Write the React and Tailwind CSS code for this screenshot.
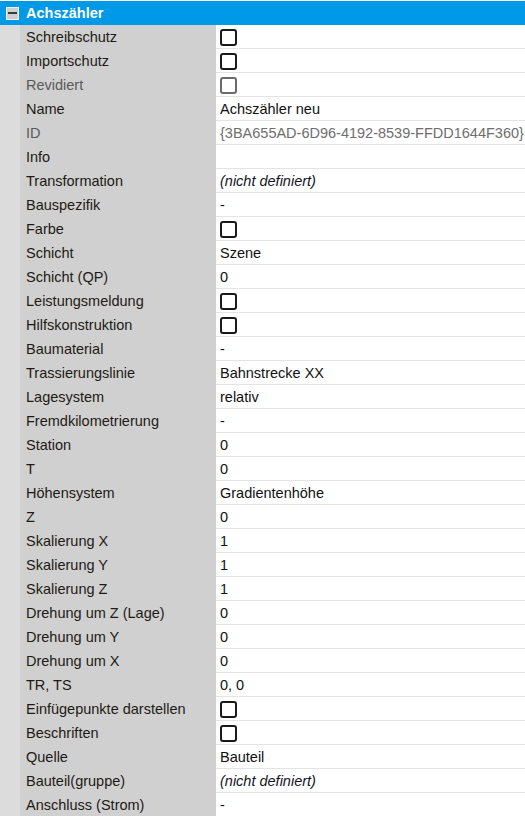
import React from 'react';

// property rows: [label, kind, value, muted]
const rows = [
    ['Schreibschutz', 'check'],
    ['Importschutz', 'check'],
    ['Revidiert', 'check', null, true],
    ['Name', 'text', 'Achszähler neu'],
    ['ID', 'text', '{3BA655AD-6D96-4192-8539-FFDD1644F360}', true],
    ['Info', 'text', ''],
    ['Transformation', 'italic', '(nicht definiert)'],
    ['Bauspezifik', 'text', '-'],
    ['Farbe', 'check'],
    ['Schicht', 'text', 'Szene'],
    ['Schicht (QP)', 'text', '0'],
    ['Leistungsmeldung', 'check'],
    ['Hilfskonstruktion', 'check'],
    ['Baumaterial', 'text', '-'],
    ['Trassierungslinie', 'text', 'Bahnstrecke XX'],
    ['Lagesystem', 'text', 'relativ'],
    ['Fremdkilometrierung', 'text', '-'],
    ['Station', 'text', '0'],
    ['T', 'text', '0'],
    ['Höhensystem', 'text', 'Gradientenhöhe'],
    ['Z', 'text', '0'],
    ['Skalierung X', 'text', '1'],
    ['Skalierung Y', 'text', '1'],
    ['Skalierung Z', 'text', '1'],
    ['Drehung um Z (Lage)', 'text', '0'],
    ['Drehung um Y', 'text', '0'],
    ['Drehung um X', 'text', '0'],
    ['TR, TS', 'text', '0, 0'],
    ['Einfügepunkte darstellen', 'check'],
    ['Beschriften', 'check'],
    ['Quelle', 'text', 'Bauteil'],
    ['Bauteil(gruppe)', 'italic', '(nicht definiert)'],
    ['Anschluss (Strom)', 'text', '-'],
];

function CheckBox({ muted }) {
    return (
        <div
            className={`w-[17px] h-[17px] rounded-[3px] border-2 bg-white ${
                muted ? 'border-[#6b6b6b]' : 'border-[#1a1a1a]'
            }`}
        />
    );
}

function Row({ label, kind, value, muted }) {
    return (
        <div className="flex h-6">
            <div className="w-5 bg-[#dcdcdc]" />
            <div
                className={`w-[196px] bg-[#d0d0d0] pl-[6px] flex items-center truncate ${
                    muted ? 'text-[#5a5a5a]' : 'text-[#1e1a14]'
                }`}
            >
                {label}
            </div>
            <div className="flex-1 border-b border-[#e3e3e3] pl-1 pt-px flex items-center whitespace-nowrap overflow-hidden">
                {kind === 'check' && <CheckBox muted={muted} />}
                {kind === 'text' && (
                    <span className={muted ? 'text-[#6e6e6e]' : 'text-[#111]'}>{value}</span>
                )}
                {kind === 'italic' && <span className="italic text-[#141428]">{value}</span>}
            </div>
        </div>
    );
}

export default function App() {
    return (
        <div
            className="w-[525px] h-[816px] overflow-hidden bg-white text-[14.5px] leading-none"
            style={{ fontFamily: '"Liberation Sans", Arial, sans-serif' }}
        >
            {/* category header */}
            <div className="mt-px h-6 bg-[#0099e8] flex items-center">
                <div className="ml-[6px] w-[13px] h-[13px] bg-[#cfcfcf] border border-[#f0f0f0] flex items-center justify-center">
                    <div className="w-[9px] h-[2px] bg-[#3a3a3a]" />
                </div>
                <span className="ml-[7px] text-white font-bold text-[14.5px]">Achszähler</span>
            </div>

            {rows.map(([label, kind, value, muted]) => (
                <Row key={label} label={label} kind={kind} value={value} muted={muted} />
            ))}
        </div>
    );
}
